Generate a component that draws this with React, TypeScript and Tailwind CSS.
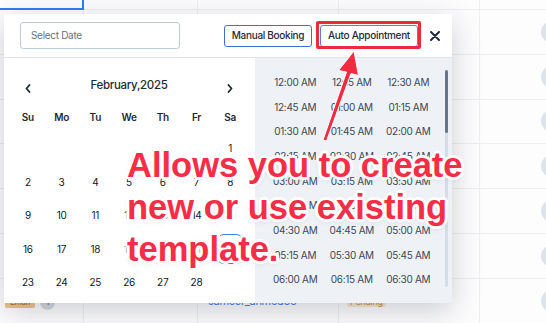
import React from "react";

const weekdays = ["Su", "Mo", "Tu", "We", "Th", "Fr", "Sa"];

const dateRows: (number | null)[][] = [
  [null, null, null, null, null, null, 1],
  [2, 3, 4, 5, 6, 7, 8],
  [9, 10, 11, 12, 13, 14, 15],
  [16, 17, 18, 19, 20, 21, 22],
  [23, 24, 25, 26, 27, 28, null],
];

const times: string[] = [];
for (let h = 0; h < 7; h++) {
  for (let m = 0; m < 60; m += 15) {
    const hh = h === 0 ? 12 : h;
    times.push(`${String(hh).padStart(2, "0")}:${String(m).padStart(2, "0")} AM`);
  }
}
const shownTimes = times.slice(0, 27);

function BackgroundRow() {
  return (
    <div className="flex h-[44.75px] shrink-0 border-b border-[#eceef2]">
      <div className="w-[84px] shrink-0 border-r border-[#eceef2]" />
      <div className="w-[114px] shrink-0 border-r border-[#eceef2]" />
      <div className="w-[141px] shrink-0 border-r border-[#eceef2]" />
      <div className="w-[141px] shrink-0 border-r border-[#eceef2]" />
      <div className="flex-1 flex items-center pl-[61px]">
        <div className="w-[22px] h-[22px] rounded-full bg-[#dde3ec] shrink-0" />
      </div>
    </div>
  );
}

export default function App() {
  return (
    <div className="relative w-[546px] h-[323px] overflow-hidden bg-[#fdfdfe] font-['Inter',sans-serif] tracking-[-0.3px]">
      {/* background table */}
      <div className="flex flex-col">
        <div className="flex h-[10px] shrink-0 border-b border-[#eceef2]">
          <div className="w-[84px] shrink-0 border-r-2 border-b-2 border-[#2f7df6] -mb-[1px]" />
          <div className="w-[114px] shrink-0 border-r border-[#eceef2]" />
          <div className="w-[141px] shrink-0 border-r border-[#eceef2]" />
          <div className="w-[141px] shrink-0 border-r border-[#eceef2]" />
          <div className="flex-1" />
        </div>
        <BackgroundRow />
        <BackgroundRow />
        <BackgroundRow />
        <BackgroundRow />
        <BackgroundRow />
        <BackgroundRow />
        <div className="flex h-[44.75px] shrink-0">
          <div className="w-[84px] shrink-0 border-r border-[#eceef2] flex items-center pl-[5px] gap-[5px] pt-[4px]">
            <div className="w-[30px] h-[11px] rounded-[2px] bg-[#efc688] text-[8px] leading-[11px] text-[#9a6a25] text-center">Eman</div>
            <div className="w-[15px] h-[15px] rounded-full bg-[#d3d8e0] text-[8px] leading-[15px] text-center text-[#4b5563]">1</div>
          </div>
          <div className="w-[114px] shrink-0 border-r border-[#eceef2]" />
          <div className="w-[141px] shrink-0 border-r border-[#eceef2] flex items-center pl-[10px]">
            <span className="text-[11px] text-[#3b7bea]">sameer_ahmed66</span>
          </div>
          <div className="w-[141px] shrink-0 border-r border-[#eceef2] flex items-center pl-[8px] pt-[2px]">
            <span className="px-[3px] h-[11px] rounded-[2px] bg-[#f6e7d2] text-[9px] leading-[11px] text-[#d08a3a]">Pending</span>
          </div>
          <div className="flex-1 flex items-center pl-[61px]">
            <div className="w-[22px] h-[22px] rounded-full bg-[#dde3ec] shrink-0" />
          </div>
        </div>
      </div>

      {/* popup */}
      <div className="absolute left-[4px] top-[14px] w-[448px] h-[289px] bg-white flex flex-col shadow-[0_8px_28px_rgba(30,35,50,0.22)]">
        <div className="h-[44px] shrink-0 flex items-center pl-[16px] border-b border-[#e2e6ec]">
          <div className="w-[160px] h-[27px] border border-[#bccbdc] rounded-[3px] flex items-center pl-[10px] text-[10px] text-[#6b7280]">
            Select Date
          </div>
          <div className="ml-[44px] w-[88px] h-[22px] border border-[#3d6fd9] rounded-[3px] flex items-center justify-center text-[10px] font-medium text-[#1f2937]">
            Manual Booking
          </div>
          <div className="ml-[8px] w-[98px] h-[22px] border border-[#5a7fdc] rounded-[3px] flex items-center justify-center text-[10px] font-medium text-[#1f2937]">
            Auto Appointment
          </div>
          <svg className="ml-[12px]" width="10" height="10" viewBox="0 0 10 10">
            <path d="M1 1 L9 9 M9 1 L1 9" stroke="#1f2937" strokeWidth="2" strokeLinecap="round" />
          </svg>
        </div>
        <div className="flex flex-1 min-h-0">
          {/* calendar */}
          <div className="w-[251px] shrink-0 pl-[7px] pt-[16px]">
            <div className="w-[236px] h-[24px] flex items-center">
              <div className="w-[33.7px] flex justify-center pt-[5px]">
                <svg width="6" height="9" viewBox="0 0 6 9">
                  <path d="M4.5 1 L1.5 4.5 L4.5 8" stroke="#1f2937" strokeWidth="1.8" fill="none" strokeLinecap="round" strokeLinejoin="round" />
                </svg>
              </div>
              <div className="flex-1 text-center text-[11.5px] font-medium text-[#1f2937]">February,2025</div>
              <div className="w-[33.7px] flex justify-center pt-[4px]">
                <svg width="6" height="9" viewBox="0 0 6 9">
                  <path d="M1.5 1 L4.5 4.5 L1.5 8" stroke="#1f2937" strokeWidth="1.8" fill="none" strokeLinecap="round" strokeLinejoin="round" />
                </svg>
              </div>
            </div>
            <div className="mt-[4px] w-[236px] grid grid-cols-7 h-[30px] items-center">
              {weekdays.map((d) => (
                <div key={d} className="text-center text-[10px] font-semibold text-[#1f2937]">
                  {d}
                </div>
              ))}
            </div>
            {dateRows.map((row, i) => (
              <div key={i} className="w-[236px] grid grid-cols-7 h-[33.5px]">
                {row.map((d, j) => (
                  <div key={j} className="flex items-center justify-center">
                    {d !== null && (
                      <div
                        className={`w-[28px] h-[30px] flex items-center justify-center text-[10px] text-[#111827] rounded-[8px] ${
                          d === 22 ? "border border-[#3b82f6]" : ""
                        }`}
                      >
                        {d}
                      </div>
                    )}
                  </div>
                ))}
              </div>
            ))}
          </div>
          {/* times */}
          <div className="flex-1 relative bg-[#eef2f7] overflow-hidden pt-[12px] pl-[12px]">
            <div className="grid grid-cols-[56.5px_56.5px_56.5px]">
              {shownTimes.map((t) => (
                <div key={t} className="h-[24.7px] flex items-center justify-center text-[10px] text-[#3c4656] whitespace-nowrap">
                  {t}
                </div>
              ))}
            </div>
            <div className="absolute right-[4px] top-[12px] w-[3px] h-[217px] rounded-full bg-[#d6dde7]">
              <div className="w-[3px] h-[63px] rounded-full bg-[#66768c]" />
            </div>
          </div>
        </div>
      </div>

      {/* annotation box */}
      <div className="absolute left-[316px] top-[21px] w-[105px] h-[28px] border-[3px] border-[#ee2a3e] rounded-[2px]" />

      {/* arrow */}
      <svg className="absolute left-0 top-0" width="546" height="323" viewBox="0 0 546 323">
        <polygon
          points="323,140 326.5,141 351,73.5 358.5,75.5 354,51 338.5,70.5 346.5,72"
          fill="#f42a40"
          stroke="#ffffff"
          strokeWidth="1"
          strokeLinejoin="round"
        />
      </svg>

      {/* annotation text */}
      <div className="absolute left-[127px] top-[144px] font-['Liberation_Sans',Arial,sans-serif] font-bold text-[34.5px] tracking-normal leading-[42px] text-[#f62d46] whitespace-nowrap [text-shadow:0_0_2px_#fff,3px_0_0_#fff,-3px_0_0_#fff,0_3px_0_#fff,0_-3px_0_#fff,2px_2px_0_#fff,-2px_-2px_0_#fff,2px_-2px_0_#fff,-2px_2px_0_#fff,0_2px_6px_rgba(0,0,0,0.15)]">
        <div>Allows you to create</div>
        <div>new or use existing</div>
        <div>template.</div>
      </div>
    </div>
  );
}
